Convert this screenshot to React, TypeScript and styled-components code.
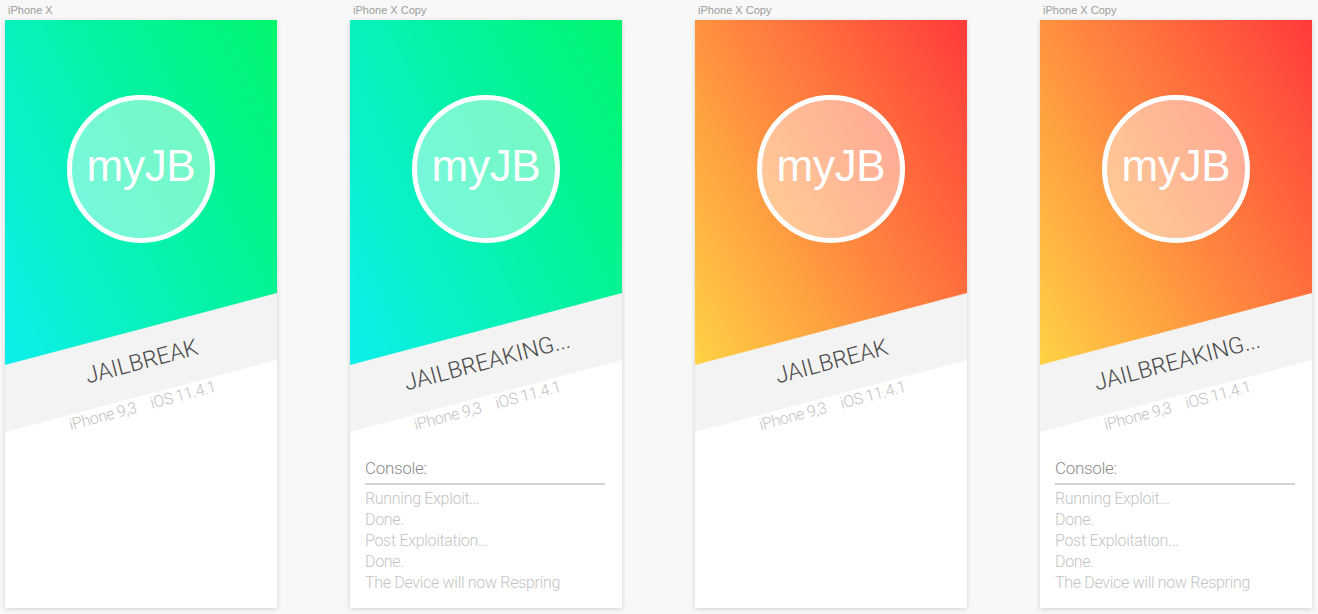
import React from "react";
import styled, { createGlobalStyle } from "styled-components";

const GlobalStyle = createGlobalStyle`
  html, body { margin: 0; padding: 0; background: #f8f8f8; }
  body { font-family: "Liberation Sans", Arial, sans-serif; }
`;

const THIN = `"Roboto", "Liberation Sans", sans-serif`;

const Page = styled.div`
  display: flex;
  gap: 73px;
  padding-left: 5px;
  width: 1318px;
  height: 614px;
  box-sizing: border-box;
  overflow: hidden;
`;

const Board = styled.div`
  display: flex;
  flex-direction: column;
  width: 272px;
`;

const Label = styled.div`
  font-family: "Liberation Sans", Arial, sans-serif;
  font-size: 11px;
  line-height: 13px;
  color: #9c9c9c;
  padding: 4px 0 3px 3px;
`;

type Theme = "green" | "orange";

const gradients: Record<Theme, string> = {
  green: "linear-gradient(65deg, #0cefec 0%, #00f56c 100%)",
  orange: "linear-gradient(60deg, #ffd244 0%, #ff3a3a 100%)",
};

const Screen = styled.div`
  width: 272px;
  height: 588px;
  background: #ffffff;
  box-shadow: 0 1px 5px rgba(0, 0, 0, 0.16);
  display: flex;
  flex-direction: column;
  overflow: hidden;
`;

const Hero = styled.div<{ $theme: Theme }>`
  height: 412px;
  flex: none;
  display: flex;
  flex-direction: column;
  align-items: center;
  background:
    linear-gradient(to bottom right, transparent calc(50% - 0.6px), #ffffff calc(50% + 0.6px)) 0 340px / 100% 72px no-repeat,
    linear-gradient(to bottom right, transparent calc(50% - 0.6px), #f3f3f3 calc(50% + 0.6px)) 0 273px / 100% 72px no-repeat,
    linear-gradient(#f3f3f3, #f3f3f3) 0 345px / 100% 67px no-repeat,
    ${(p) => gradients[p.$theme]} 0 0 / 100% 345px no-repeat;
`;

const Logo = styled.div`
  margin-top: 75px;
  width: 148px;
  height: 148px;
  box-sizing: border-box;
  border-radius: 50%;
  border: 5px solid #ffffff;
  background: rgba(255, 255, 255, 0.45);
  display: flex;
  align-items: center;
  justify-content: center;
  color: #ffffff;
  font-family: "Liberation Sans", Arial, sans-serif;
  font-size: 44px;
  letter-spacing: -0.3px;
  padding-bottom: 7px;
`;

const Title = styled.div`
  margin-top: 105px;
  margin-left: 2px;
  font-family: ${THIN};
  font-weight: 300;
  font-size: 23px;
  line-height: 28px;
  color: #4a4a4a;
  white-space: nowrap;
  transform: rotate(-14.8deg);
`;

const Info = styled.div`
  margin-top: 20px;
  margin-left: 3px;
  display: flex;
  gap: 15px;
  font-family: ${THIN};
  font-weight: 300;
  font-size: 16px;
  line-height: 20px;
  letter-spacing: -0.4px;
  color: #c2c2c2;
  white-space: nowrap;
  transform: rotate(-14.8deg);
`;

const Console = styled.div`
  padding: 26px 17px 0 15px;
  display: flex;
  flex-direction: column;
`;

const ConsoleHead = styled.div`
  font-family: ${THIN};
  font-weight: 300;
  font-size: 17px;
  line-height: 20px;
  letter-spacing: -0.3px;
  color: #8c8c8c;
  padding-bottom: 5px;
  border-bottom: 2px solid #d4d4d4;
`;

const ConsoleList = styled.div`
  padding-top: 3px;
  display: flex;
  flex-direction: column;
`;

const ConsoleLine = styled.div`
  font-family: ${THIN};
  font-weight: 300;
  font-size: 16px;
  line-height: 21px;
  letter-spacing: -0.3px;
  color: #c4c4c4;
  white-space: nowrap;
`;

const boards: { label: string; theme: Theme; title: string; console: boolean }[] = [
  { label: "iPhone X", theme: "green", title: "JAILBREAK", console: false },
  { label: "iPhone X Copy", theme: "green", title: "JAILBREAKING...", console: true },
  { label: "iPhone X Copy", theme: "orange", title: "JAILBREAK", console: false },
  { label: "iPhone X Copy", theme: "orange", title: "JAILBREAKING...", console: true },
];

const lines = [
  "Running Exploit...",
  "Done.",
  "Post Exploitation...",
  "Done.",
  "The Device will now Respring",
];

export default function App() {
  return (
    <>
      <GlobalStyle />
      <Page>
        {boards.map((b, i) => (
          <Board key={i}>
            <Label>{b.label}</Label>
            <Screen>
              <Hero $theme={b.theme}>
                <Logo>myJB</Logo>
                <Title>{b.title}</Title>
                <Info>
                  <span>iPhone 9,3</span>
                  <span>iOS 11.4.1</span>
                </Info>
              </Hero>
              {b.console && (
                <Console>
                  <ConsoleHead>Console:</ConsoleHead>
                  <ConsoleList>
                    {lines.map((l, j) => (
                      <ConsoleLine key={j}>{l}</ConsoleLine>
                    ))}
                  </ConsoleList>
                </Console>
              )}
            </Screen>
          </Board>
        ))}
      </Page>
    </>
  );
}
